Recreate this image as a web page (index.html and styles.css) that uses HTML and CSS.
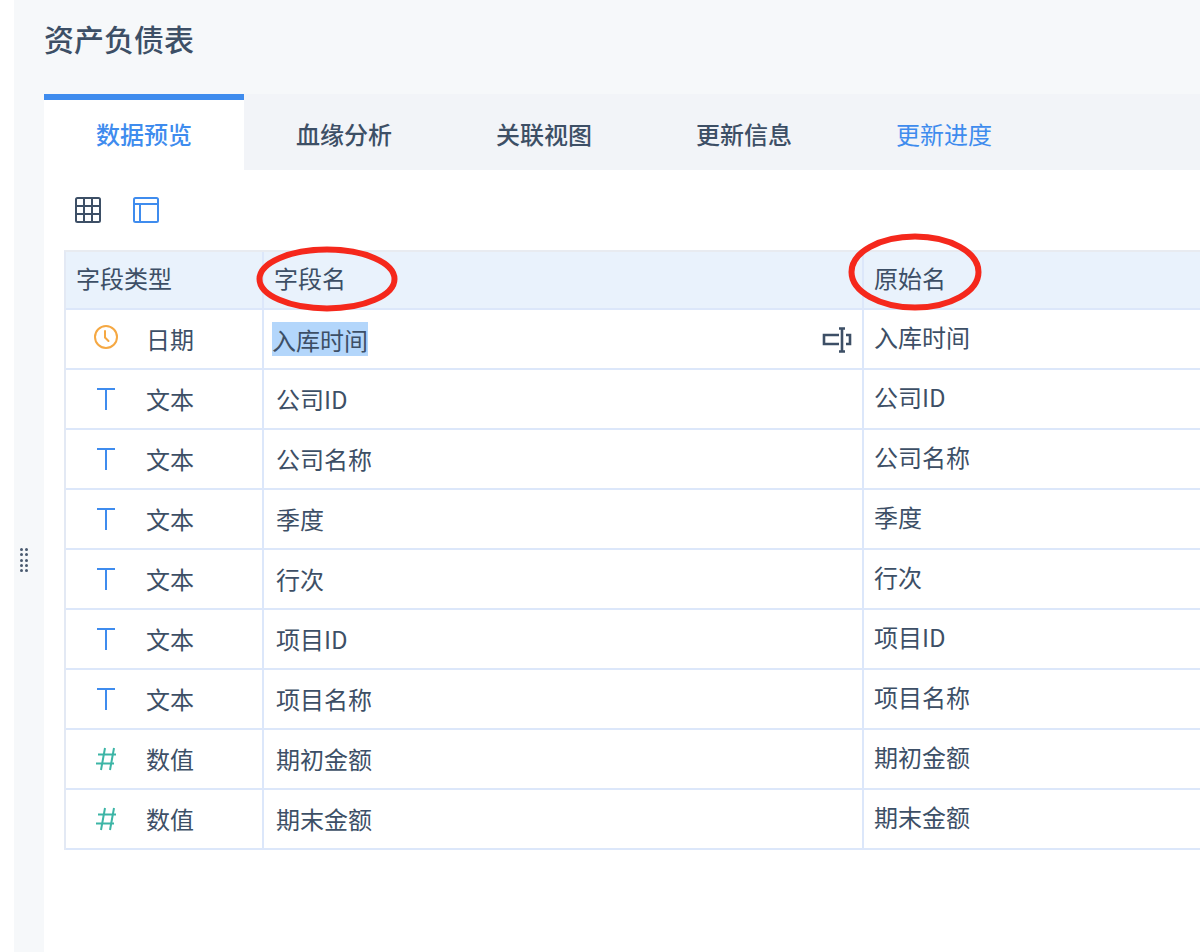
FILE: index.html
```html
<!DOCTYPE html>
<html lang="zh-CN">
<head>
<meta charset="utf-8">
<title>资产负债表</title>
<link rel="stylesheet" href="styles.css">
</head>
<body>
<div class="page">
  <aside class="rail">
    <div class="handle"><i></i><i></i><i></i><i></i><i></i><i></i><i></i><i></i><i></i><i></i></div>
  </aside>
  <main class="main">
    <header class="head"><h1>资产负债表</h1></header>
    <nav class="tabs">
      <div class="tab active">数据预览</div>
      <div class="tab">血缘分析</div>
      <div class="tab">关联视图</div>
      <div class="tab">更新信息</div>
      <div class="tab link">更新进度</div>
    </nav>
    <section class="body">
      <div class="tools">
        <svg class="tool" viewBox="0 0 26 26" fill="none" stroke="#3d4f66" stroke-width="2"><rect x="1" y="1" width="24" height="24" rx="1.5"/><path d="M9 1v24M17 1v24M1 9h24M1 17h24" stroke-width="2"/></svg>
        <svg class="tool" viewBox="0 0 26 26" fill="none" stroke="#3f8cee" stroke-width="2"><rect x="1" y="1" width="24" height="24" rx="1.5"/><path d="M1 7h24M7 7v18" stroke-width="2"/></svg>
      </div>
      <div class="table">
        <div class="row hdr">
          <div class="cell c1"><span class="htext">字段类型</span></div>
          <div class="cell c2"><span class="htext">字段名</span></div>
          <div class="cell c3"><span class="htext">原始名</span></div>
        </div>
        <div class="row">
          <div class="cell c1"><span class="ico"><svg class="ic-clock" viewBox="0 0 24 24" fill="none" stroke="#f5a843" stroke-width="2"><circle cx="12" cy="12" r="11"/><path d="M11 6v6.500l3.500 3.500" stroke-linecap="round"/></svg></span><span class="type">日期</span></div>
          <div class="cell c2 editing"><span class="sel">入库时间</span>
            <svg class="rename" viewBox="0 0 30 26" fill="none" stroke="#3d4f66" stroke-width="2.600"><path d="M17 8H2v9h15M24 8h4v9h-4M17 1.500h6M17 24.500h6M20 1v24"/></svg>
          </div>
          <div class="cell c3"><span class="orig">入库时间</span></div>
        </div>
        <div class="row">
          <div class="cell c1"><span class="ico"><svg class="ic-t" viewBox="0 0 18 22" fill="none" stroke="#3f8cee" stroke-width="2"><path d="M0 1h18M9 1v21"/></svg></span><span class="type">文本</span></div>
          <div class="cell c2"><span class="name">公司ID</span></div>
          <div class="cell c3"><span class="orig">公司ID</span></div>
        </div>
        <div class="row">
          <div class="cell c1"><span class="ico"><svg class="ic-t" viewBox="0 0 18 22" fill="none" stroke="#3f8cee" stroke-width="2"><path d="M0 1h18M9 1v21"/></svg></span><span class="type">文本</span></div>
          <div class="cell c2"><span class="name">公司名称</span></div>
          <div class="cell c3"><span class="orig">公司名称</span></div>
        </div>
        <div class="row">
          <div class="cell c1"><span class="ico"><svg class="ic-t" viewBox="0 0 18 22" fill="none" stroke="#3f8cee" stroke-width="2"><path d="M0 1h18M9 1v21"/></svg></span><span class="type">文本</span></div>
          <div class="cell c2"><span class="name">季度</span></div>
          <div class="cell c3"><span class="orig">季度</span></div>
        </div>
        <div class="row">
          <div class="cell c1"><span class="ico"><svg class="ic-t" viewBox="0 0 18 22" fill="none" stroke="#3f8cee" stroke-width="2"><path d="M0 1h18M9 1v21"/></svg></span><span class="type">文本</span></div>
          <div class="cell c2"><span class="name">行次</span></div>
          <div class="cell c3"><span class="orig">行次</span></div>
        </div>
        <div class="row">
          <div class="cell c1"><span class="ico"><svg class="ic-t" viewBox="0 0 18 22" fill="none" stroke="#3f8cee" stroke-width="2"><path d="M0 1h18M9 1v21"/></svg></span><span class="type">文本</span></div>
          <div class="cell c2"><span class="name">项目ID</span></div>
          <div class="cell c3"><span class="orig">项目ID</span></div>
        </div>
        <div class="row">
          <div class="cell c1"><span class="ico"><svg class="ic-t" viewBox="0 0 18 22" fill="none" stroke="#3f8cee" stroke-width="2"><path d="M0 1h18M9 1v21"/></svg></span><span class="type">文本</span></div>
          <div class="cell c2"><span class="name">项目名称</span></div>
          <div class="cell c3"><span class="orig">项目名称</span></div>
        </div>
        <div class="row">
          <div class="cell c1"><span class="ico"><svg class="ic-h" viewBox="0 0 20 24" fill="none" stroke="#3cb5a6" stroke-width="2"><path d="M9 1 5 23M18 1l-4 22M2 7.500h18M0 16.500h18"/></svg></span><span class="type">数值</span></div>
          <div class="cell c2"><span class="name">期初金额</span></div>
          <div class="cell c3"><span class="orig">期初金额</span></div>
        </div>
        <div class="row">
          <div class="cell c1"><span class="ico"><svg class="ic-h" viewBox="0 0 20 24" fill="none" stroke="#3cb5a6" stroke-width="2"><path d="M9 1 5 23M18 1l-4 22M2 7.500h18M0 16.500h18"/></svg></span><span class="type">数值</span></div>
          <div class="cell c2"><span class="name">期末金额</span></div>
          <div class="cell c3"><span class="orig">期末金额</span></div>
        </div>
      </div>
    </section>
  </main>
</div>
<svg class="ring ring-a" viewBox="0 0 144 68" fill="none" stroke="#f5281c" stroke-width="6"><ellipse cx="72" cy="34" rx="67.500" ry="29.500"/></svg>
<svg class="ring ring-b" viewBox="0 0 136 80" fill="none" stroke="#f5281c" stroke-width="6"><ellipse cx="68" cy="40" rx="63.500" ry="35.500"/></svg>
</body>
</html>
```
FILE: styles.css
```css
* { box-sizing: border-box; }
html, body { margin: 0; padding: 0; }
body {
  width: 1200px;
  height: 952px;
  overflow: hidden;
  background: #fff;
  font-family: "Noto Sans CJK SC", "Noto Sans", sans-serif;
  color: #3d4f66;
  position: relative;
}
.page { display: flex; height: 952px; padding-left: 14px; }
.rail {
  width: 30px;
  flex: none;
  background: #f6f8fa;
  padding: 548px 0 0 6px;
}
.handle { display: grid; grid-template-columns: 3px 3px; gap: 2.300px 2px; width: 8px; }
.handle i { width: 3px; height: 3px; border-radius: 50%; background: #4a5a70; }
.main { flex: 1; min-width: 0; display: flex; flex-direction: column; }
.head { height: 94px; background: #f6f8fa; padding: 18px 0 0 0; }
.head h1 { margin: 0; font-size: 30px; line-height: 40px; font-weight: 500; }
.tabs { display: flex; height: 76px; background: #f2f4f8; }
.tab {
  width: 200px;
  display: flex;
  align-items: center;
  justify-content: center;
  font-size: 24px;
  font-weight: 500;
  padding-top: 6px;
  border-top: 6px solid transparent;
  padding-bottom: 10px;
}
.tab.active { background: #fff; border-top-color: #3f8cee; color: #3f8cee; }
.tab.link { color: #3f8cee; font-weight: 400; }
.body { padding: 27px 0 0 20px; flex: 1; }
.tools { display: flex; gap: 32px; height: 53px; padding-left: 11px; }
.tool { width: 26px; height: 26px; }
.table { width: 1136px; border-left: 2px solid #e3e9f4; border-top: 2px solid #e8ebf0; }
.row { display: flex; height: 60px; border-bottom: 2px solid #dce7fa; }
.row.hdr { height: 58px; background: #e9f2fc; }
.cell { display: flex; align-items: center; font-size: 24px; line-height: 34px; position: relative; }
.c1 { width: 198px; border-right: 2px solid #dce7fa; }
.c2 { width: 600px; border-right: 2px solid #dce7fa; padding-left: 12px; }
.c3 { flex: 1; padding-left: 10px; }
.hdr .c1 { padding-left: 10px; }
.hdr .c2 { padding-left: 10px; }
.hdr .c3 { padding-left: 10px; }
.htext { display: block; margin-top: -4px; }
.name, .type { display: block; margin-top: -1px; }
.ico { width: 80px; display: flex; justify-content: center; }
.orig { display: block; margin-top: -5px; }
.sel { background: #b3d6fb; display: block; height: 34px; margin-left: -4px; padding-top: 1px; line-height: 34px; }
.ic-clock { width: 24px; height: 24px; margin-top: -4px; }
.ic-t { width: 18px; height: 22px; }
.ic-h { width: 20px; height: 24px; }
.rename { width: 30px; height: 26px; position: absolute; right: 10px; top: 17px; }
.ring { position: absolute; }
.ring-a { left: 255px; top: 245px; width: 144px; height: 68px; }
.ring-b { left: 847px; top: 232px; width: 136px; height: 80px; }
```
